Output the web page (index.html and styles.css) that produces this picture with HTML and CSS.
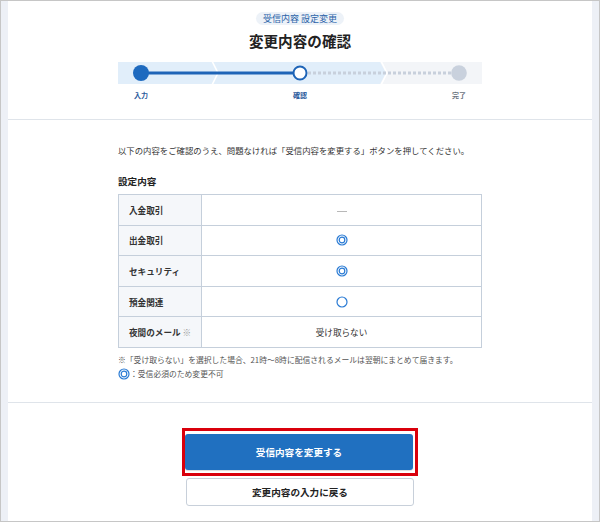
FILE: index.html
```html
<!DOCTYPE html>
<html lang="ja">
<head>
<meta charset="utf-8">
<link rel="stylesheet" href="styles.css">
</head>
<body>
<div class="frame">
  <div class="panel">
    <section class="head">
      <div class="badge">受信内容 設定変更</div>
      <h1 class="title">変更内容の確認</h1>
      <div class="stepper">
        <svg class="track" width="364" height="22" viewBox="0 0 364 22">
          <rect x="0" y="0" width="364" height="22" fill="#f3f5f8"/>
          <polygon points="0,0 262,0 268,11 262,22 0,22" fill="#e1eefa"/>
          <polyline points="94,-1 100,11 94,23" fill="none" stroke="#ffffff" stroke-width="1.6"/>
          <polyline points="263,-1 269,11 263,23" fill="none" stroke="#ffffff" stroke-width="1.6"/>
          <line x1="23" y1="11" x2="182" y2="11" stroke="#1e64b7" stroke-width="3"/>
          <line x1="190" y1="11" x2="334" y2="11" stroke="#c8d0dc" stroke-width="3" stroke-dasharray="3 2"/>
          <circle cx="23" cy="11" r="8" fill="#1e6abf"/>
          <circle cx="182" cy="11" r="6.5" fill="#ffffff" stroke="#1e64b7" stroke-width="2"/>
          <circle cx="341" cy="11" r="7.8" fill="#c9d1dd"/>
        </svg>
        <div class="labels">
          <span class="lbl on">入力</span>
          <span class="lbl on">確認</span>
          <span class="lbl">完了</span>
        </div>
      </div>
    </section>
    <section class="body">
      <div class="wrap">
        <p class="lead">以下の内容をご確認のうえ、問題なければ「受信内容を変更する」ボタンを押してください。</p>
        <h2 class="sub">設定内容</h2>
        <table class="settings">
          <tr><th>入金取引</th><td><span class="dash"></span></td></tr>
          <tr><th>出金取引</th><td>
            <svg class="ic" width="12" height="12" viewBox="0 0 12 12"><circle cx="6" cy="6" r="5" fill="none" stroke="#2a7bd4" stroke-width="1.2"/><circle cx="6" cy="6" r="2.8" fill="none" stroke="#2a7bd4" stroke-width="1.2"/></svg>
          </td></tr>
          <tr><th>セキュリティ</th><td>
            <svg class="ic" width="12" height="12" viewBox="0 0 12 12"><circle cx="6" cy="6" r="5" fill="none" stroke="#2a7bd4" stroke-width="1.2"/><circle cx="6" cy="6" r="2.8" fill="none" stroke="#2a7bd4" stroke-width="1.2"/></svg>
          </td></tr>
          <tr><th>預金関連</th><td>
            <svg class="ic" width="12" height="12" viewBox="0 0 12 12"><circle cx="6" cy="6" r="5" fill="none" stroke="#2a7bd4" stroke-width="1.2"/></svg>
          </td></tr>
          <tr><th>夜間のメール <span class="kome">※</span></th><td class="txt">受け取らない</td></tr>
        </table>
        <p class="note">※「受け取らない」を選択した場合、21時～8時に配信されるメールは翌朝にまとめて届きます。</p>
        <p class="note legend"><svg class="ic" width="12" height="12" viewBox="0 0 12 12"><circle cx="6" cy="6" r="5" fill="none" stroke="#2a7bd4" stroke-width="1.2"/><circle cx="6" cy="6" r="2.8" fill="none" stroke="#2a7bd4" stroke-width="1.2"/></svg>：受信必須のため変更不可</p>
      </div>
    </section>
    <section class="foot">
      <div class="highlight">
        <button class="btn primary" type="button">受信内容を変更する</button>
      </div>
      <button class="btn secondary" type="button">変更内容の入力に戻る</button>
    </section>
  </div>
</div>
</body>
</html>
```

FILE: styles.css
```css
* { box-sizing: border-box; }
html, body { margin: 0; padding: 0; }
body {
  width: 600px;
  height: 522px;
  font-family: "Noto Sans CJK JP", "Noto Sans", sans-serif;
  color: #333;
  background: #fff;
}
.frame {
  width: 600px;
  height: 522px;
  border: 1px solid #c6c6c6;
  background: #edf0f6;
  padding: 0 7px;
}
.panel {
  height: 100%;
  background: #fff;
  display: flex;
  flex-direction: column;
}
.head {
  height: 119px;
  flex: none;
  border-bottom: 1px solid #dfe4ea;
  padding-top: 11px;
  display: flex;
  flex-direction: column;
  align-items: center;
}
.badge {
  height: 13px;
  line-height: 13px;
  font-size: 9px;
  padding: 0 7px;
  border-radius: 7px;
  background: #edf2f8;
  color: #2b63a8;
}
.title {
  margin: 7px 0 0;
  font-size: 14.6px;
  line-height: 18px;
  font-weight: 700;
  color: #222;
}
.stepper {
  margin-top: 12px;
  width: 364px;
}
.track { display: block; }
.labels {
  margin-top: 6px;
  display: flex;
  justify-content: space-between;
  padding: 0 16px;
}
.lbl {
  font-size: 7px;
  line-height: 10px;
  font-weight: 700;
  color: #6b7480;
}
.lbl.on { color: #2c5b9c; }
.body {
  height: 283px;
  flex: none;
  border-bottom: 1px solid #dfe4ea;
  padding-top: 24px;
  display: flex;
  justify-content: center;
}
.wrap { width: 364px; }
.lead {
  margin: 0;
  font-size: 8.4px;
  line-height: 13px;
  color: #333;
  white-space: nowrap;
}
.sub {
  margin: 17px 0 0;
  font-size: 9.6px;
  line-height: 14px;
  font-weight: 700;
  color: #222;
}
.settings {
  margin-top: 6px;
  width: 364px;
  border-collapse: collapse;
  border: 1px solid #c5cfdb;
}
.settings th, .settings td {
  border: 1px solid #c5cfdb;
  height: 30.6px;
  padding: 0;
  font-size: 8.6px;
}
.settings th {
  width: 83px;
  background: #f5f7fa;
  text-align: left;
  padding-left: 10px;
  font-weight: 700;
  color: #333;
}
.settings td {
  text-align: center;
  vertical-align: middle;
}
.settings td.txt { color: #333; font-size: 8.6px; }
.kome { color: #999; font-weight: 400; }
.dash {
  display: inline-block;
  width: 10px;
  height: 1px;
  background: #b8b8b8;
  vertical-align: middle;
}
.ic { display: inline-block; vertical-align: middle; }
.settings .ic { display: block; margin: 0 auto; }
.note {
  margin: 5px 0 0;
  font-size: 7.8px;
  line-height: 14px;
  color: #555;
  white-space: nowrap;
}
.note.legend {
  margin-top: 0;
  display: flex;
  align-items: center;
}
.foot {
  flex: 1;
  display: flex;
  flex-direction: column;
  align-items: center;
  padding-top: 25px;
}
.highlight {
  border: 3px solid #d9000c;
  padding: 3px 2px 3px 0;
  display: flex;
}
.btn {
  font-family: "Noto Sans CJK JP", "Noto Sans", sans-serif;
  font-weight: 700;
  font-size: 9.6px;
  width: 228px;
  border-radius: 3px;
  cursor: pointer;
  padding: 0;
}
.primary {
  height: 36px;
  background: #2070c0;
  color: #fff;
  border: none;
  box-shadow: 0 1px 1px rgba(0,0,0,0.15);
}
.secondary {
  margin-top: 2px;
  height: 28px;
  background: #fff;
  color: #222;
  border: 1px solid #c8d0da;
}
```
